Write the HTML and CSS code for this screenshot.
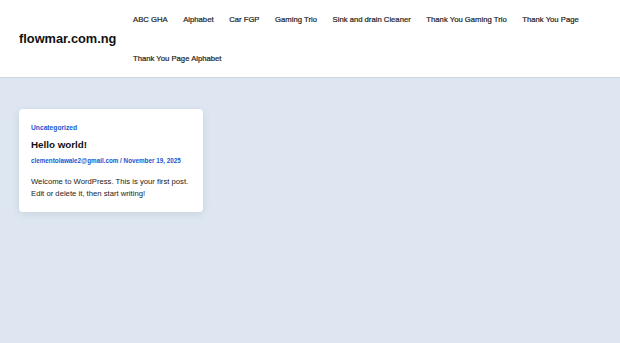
FILE: index.html
```html
<!DOCTYPE html>
<html lang="en">
<head>
  <meta charset="UTF-8">
  <title>flowmar.com.ng</title>
  <link rel="stylesheet" href="styles.css">
</head>
<body>
  <header class="site-header">
    <a class="site-title" href="#">flowmar.com.ng</a>
    <nav class="main-nav">
      <a href="#">ABC GHA</a>
      <a href="#">Alphabet</a>
      <a href="#">Car FGP</a>
      <a href="#">Gaming Trio</a>
      <a href="#">Sink and drain Cleaner</a>
      <a href="#">Thank You Gaming Trio</a>
      <a href="#">Thank You Page</a>
      <a href="#">Thank You Page Alphabet</a>
    </nav>
  </header>

  <main class="posts">
    <article class="post-card">
      <a class="post-cat" href="#">Uncategorized</a>
      <h2 class="post-title">Hello world!</h2>
      <div class="post-meta">
        <a href="#">clementolawale2@gmail.com</a> / <a href="#">November 19, 2025</a>
      </div>
      <p class="post-excerpt">Welcome to WordPress. This is your first post. Edit or delete it, then start writing!</p>
    </article>
  </main>
</body>
</html>
```

FILE: styles.css
```css
* {
  box-sizing: border-box;
}

body {
  margin: 0;
  font-family: 'Liberation Sans', Arial, sans-serif;
  background-color: #dee7f1;
  color: #1b1d21;
}

a {
  text-decoration: none;
  color: inherit;
}

.site-header {
  display: flex;
  align-items: center;
  height: 78px;
  padding: 0 0 0 19px;
  background-color: #fff;
  border-bottom: 1px solid #cdd6e1;
}

.site-title {
  width: 114px;
  flex-shrink: 0;
  font-size: 12.8px;
  font-weight: bold;
  color: #111;
}

.main-nav {
  display: flex;
  flex-wrap: wrap;
  column-gap: 15.6px;
  row-gap: 0;
  width: 470px;
}

.main-nav a {
  font-size: 7.7px;
  line-height: 39px;
  color: #222;
  -webkit-text-stroke: 0.2px #222;
}

.posts {
  padding: 31px 19px;
}

.post-card {
  width: 184px;
  padding: 15px 12px 12px;
  background: #fff;
  border-radius: 4px;
  box-shadow: 0 2px 8px rgba(40, 60, 90, 0.12);
}

.post-cat {
  display: block;
  font-size: 6.7px;
  font-weight: bold;
  color: #1358d0;
}

.post-title {
  margin: 8px 0 7px;
  font-size: 9.8px;
  font-weight: bold;
  color: #111;
}

.post-meta {
  font-size: 6.3px;
  font-weight: bold;
  color: #1358d0;
}

.post-excerpt {
  margin: 12px 0 0;
  font-size: 7.7px;
  line-height: 12px;
  color: #1b1b1b;
}
```
